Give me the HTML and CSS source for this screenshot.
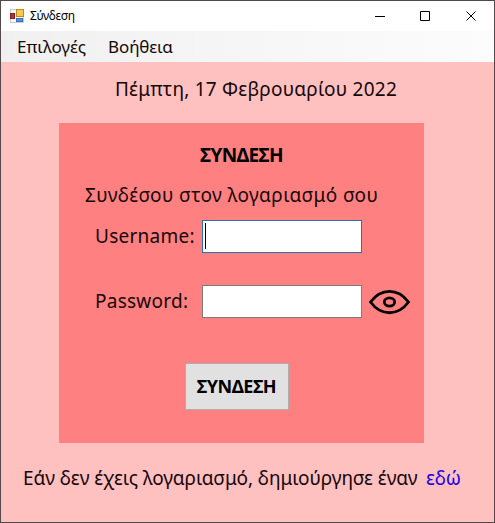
FILE: index.html
```html
<!DOCTYPE html>
<html lang="el">
<head>
<meta charset="utf-8">
<title>Σύνδεση</title>
<link rel="stylesheet" href="styles.css">
</head>
<body>
<div class="window">
  <header class="titlebar">
    <svg class="app-icon" width="14" height="14" viewBox="0 0 14 14">
      <rect x=".5" y=".5" width="13" height="13" fill="#f4f6f8" stroke="#c5ccd3"/>
      <rect x=".5" y="4.5" width="4" height="5" fill="#b53232" stroke="#842020"/>
      <rect x="6.5" y=".5" width="7" height="7" fill="#f7ca4d" stroke="#b88c25"/>
      <rect x="6.5" y="9.5" width="6" height="3" fill="#5a91d8" stroke="#3d70b7"/>
    </svg>
    <span class="title">Σύνδεση</span>
    <svg class="controls" width="102" height="10" viewBox="0 0 102 10" fill="none" stroke="#000">
      <path d="M0 5.5H10M45.5 .5h9v9h-9zM91.500 .5l9 9M100.500 .5l-9 9"/>
    </svg>
  </header>
  <nav class="menu"><span class="options">Επιλογές</span><span class="help">Βοήθεια</span></nav>
  <main class="content">
    <div class="date">Πέμπτη, 17 Φεβρουαρίου 2022</div>
    <form class="panel">
      <h1 class="heading">ΣΥΝΔΕΣΗ</h1>
      <p class="subtitle">Συνδέσου στον λογαριασμό σου</p>
      <div class="row"><label class="user">Username:</label><div class="field focused"><i class="caret"></i></div></div>
      <div class="row second"><label class="pass">Password:</label><div class="field"></div>
        <svg class="eye" width="42" height="26" viewBox="0 0 42 26" fill="none" stroke="#000" stroke-width="2.800">
          <path d="M1.500 13C12-1.300 29-1.300 39.500 13C29 27.300 12 27.300 1.500 13Z"/>
          <ellipse cx="20.500" cy="13" rx="5.200" ry="4.200"/>
        </svg>
      </div>
      <button class="submit" type="button"><span>ΣΥΝΔΕΣΗ</span></button>
    </form>
    <div class="footer"><span class="question">Εάν δεν έχεις λογαριασμό, δημιούργησε έναν</span><a class="link">εδώ</a></div>
  </main>
</div>
</body>
</html>
```
FILE: styles.css
```css
* { box-sizing: border-box; }
body { margin: 0; font: 19px/24px "Noto Sans", sans-serif; color: #160707; overflow: hidden; }
.window { width: 495px; height: 523px; border: 1px solid #55484c; background: #ffc0c0; display: flex; flex-direction: column; white-space: nowrap; }
.titlebar { height: 30px; background: #fff; display: flex; align-items: center; padding: 0 17px 0 9px; }
.title { font-size: 12px; color: #000; margin-left: 6px; letter-spacing: -.35px; }
.controls { margin-left: auto; }
.menu { height: 31px; background: linear-gradient(90deg, #f0f0f0, #fcfcfc); display: flex; align-items: center; padding-left: 16px; font-size: 17px; letter-spacing: -.1px; }
.options { width: 91px; }
.content { flex: 1; display: flex; flex-direction: column; }
.date { margin: 15px 0 0 114px; letter-spacing: .23px; }
.panel { width: 365px; height: 320px; margin: 22px 0 0 58px; background: #ff8080; padding-top: 20px; }
.heading { margin: 0 0 0 141px; font-size: 19px; line-height: 24px; letter-spacing: -.6px; color: #000; }
.subtitle { margin: 16px 0 0 26px; letter-spacing: .4px; }
.row { display: flex; height: 33px; align-items: center; padding-left: 36px; margin-top: 13px; }
.row label { width: 107px; letter-spacing: .25px; margin-top: -1px; }
.row.second { margin-top: 32px; }
.field { width: 160px; height: 33px; border: 1px solid #7a7a7a; background: #fff; padding: 2px; }
.focused { border-color: #2873b5; }
.caret { display: block; width: 1px; height: 26px; background: #000; }
.eye { margin-left: 7px; }
.submit { display: flex; justify-content: center; align-items: center; width: 104px; height: 47px; margin: 45px 0 0 126px; padding: 0 1px 2px 0; border: 1px solid #adadad; background: #e1e1e1; font: bold 18px/24px "Noto Sans", sans-serif; letter-spacing: -.45px; color: #000; }
.footer { display: flex; margin: 23px 0 0 22px; letter-spacing: -.08px; }
.question { width: 403px; }
.link { color: #1c00e3; }
```
